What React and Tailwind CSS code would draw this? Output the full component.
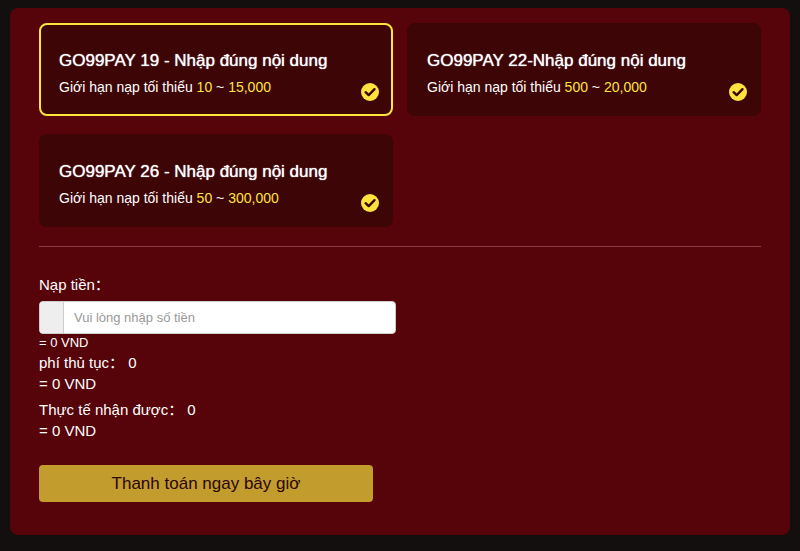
import React, { useState } from 'react';

const channels = [
  { id: 'go99pay-19', name: 'GO99PAY 19 - Nhập đúng nội dung', min: '10', max: '15,000' },
  { id: 'go99pay-22', name: 'GO99PAY 22-Nhập đúng nội dung', min: '500', max: '20,000' },
  { id: 'go99pay-26', name: 'GO99PAY 26 - Nhập đúng nội dung', min: '50', max: '300,000' },
];

const CheckIcon = () => (
  <svg viewBox="0 0 18 18" className="w-[18px] h-[18px] shrink-0" aria-hidden="true">
    <circle cx="9" cy="9" r="9" fill="#fee43c" />
    <path
      d="M4.6 9.2 L7.7 12.1 L13.5 6.2"
      fill="none"
      stroke="#3d0506"
      strokeWidth="2.4"
      strokeLinecap="round"
      strokeLinejoin="round"
    />
  </svg>
);

const ChannelCard = ({ channel, selected, onSelect }) => (
  <label
    className={`flex items-end justify-between rounded-lg border-2 bg-[#3d0506] pl-[18px] pr-3 pt-6 pb-[13px] cursor-pointer ${
      selected ? 'border-[#fee43c]' : 'border-transparent'
    }`}
  >
    <input
      type="radio"
      name="channel"
      value={channel.id}
      checked={selected}
      onChange={() => onSelect(channel.id)}
      className="sr-only"
    />
    <span className="block">
      <span className="block text-[17px] leading-6 [text-shadow:0_0_1px_#ffffff]">{channel.name}</span>
      <span className="block text-sm leading-7">
        Giới hạn nạp tối thiểu <span className="text-[#fee43c]">{channel.min}</span> ~{' '}
        <span className="text-[#fee43c]">{channel.max}</span>
      </span>
    </span>
    <CheckIcon />
  </label>
);

const App = () => {
  const [selectedId, setSelectedId] = useState('go99pay-19');
  const [amount, setAmount] = useState('');

  const value = Number(amount) || 0;

  return (
    <div className="min-h-screen bg-[#130f0e] px-[10px] pt-2 pb-4 text-white font-['Liberation_Sans','Noto_Sans_CJK_SC',sans-serif]">
      <form
        onSubmit={(e) => e.preventDefault()}
        className="rounded-lg bg-[#56030a] px-[29px] pt-[15px] pb-[33px]"
      >
        <div className="grid grid-cols-2 gap-x-[14px] gap-y-[18px]">
          {channels.map((channel) => (
            <ChannelCard
              key={channel.id}
              channel={channel}
              selected={channel.id === selectedId}
              onSelect={setSelectedId}
            />
          ))}
        </div>

        <hr className="mt-[19px] mb-[27px] border-[#8a3c42]" />

        <label htmlFor="amount" className="block text-[15px] leading-[22px]">
          Nạp tiền：
        </label>
        <div className="mt-[5px] flex h-[33px] w-[357px] max-w-full overflow-hidden rounded border border-[#cccccc] bg-white">
          <span className="w-6 border-r border-[#cccccc] bg-[#eeeeee]" />
          <input
            id="amount"
            type="text"
            value={amount}
            onChange={(e) => setAmount(e.target.value)}
            placeholder="Vui lòng nhập số tiền"
            className="min-w-0 flex-1 px-[10px] text-[13px] text-[#333333] placeholder:text-[#999999] outline-none"
          />
        </div>
        <p className="text-[13px] leading-[18px]">= {value} VND</p>
        <div className="text-[15px] leading-[21px]">
          <p>phí thủ tục： 0</p>
          <p>= 0 VND</p>
          <p className="mt-[5px]">Thực tế nhận được： {value}</p>
          <p>= {value} VND</p>
        </div>

        <button
          type="submit"
          className="mt-6 h-[37px] w-[334px] max-w-full rounded bg-[#c39c2e] text-[17px] text-[#2a0506]"
        >
          Thanh toán ngay bây giờ
        </button>
      </form>
    </div>
  );
};

export default App;
